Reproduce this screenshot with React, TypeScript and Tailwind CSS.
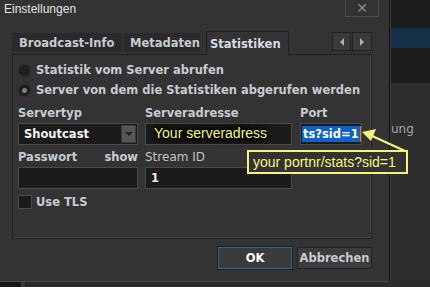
import React from 'react';

const label =
  "font-['DejaVu_Sans',sans-serif] text-[11.5px] font-bold text-[#c6ccd2] leading-[16px] whitespace-nowrap";
const input = 'h-[22px] bg-[#1b1b1b] border border-[#4a4a4a] flex items-center';

const Radio = ({ checked, text }: { checked?: boolean; text: string }) => (
  <div className="flex items-center h-[20px] gap-[5px]">
    <span className="w-[13px] h-[13px] rounded-full bg-[#1e1e1e] border border-[#2c2c2c] flex items-center justify-center">
      {checked && <span className="w-[5px] h-[5px] rounded-full bg-[#808080]" />}
    </span>
    <span className={label}>{text}</span>
  </div>
);

export default function App() {
  return (
    <div className="relative w-[430px] h-[287px] overflow-hidden bg-[#1c1c1c] flex flex-col">
      <div className="flex h-[282px]">
        {/* dialog */}
        <div className="w-[390px] h-full bg-[#333333] border-r border-[#121212] border-b border-b-[#4a4a4a] flex flex-col">
          {/* title bar */}
          <div className="flex justify-between h-[17px]">
            <span className="pl-[4px] pt-[1px] font-['Liberation_Sans',sans-serif] text-[12px] leading-[16px] text-[#e2e2e2]">
              Einstellungen
            </span>
            <div className="-mt-px mr-[10px] w-[34px] h-[18px] border border-[#4e4e4e] flex items-center justify-center text-[#8a8a8a] font-['DejaVu_Sans',sans-serif] text-[14px] font-bold leading-none">
              ✕
            </div>
          </div>

          {/* tabs */}
          <div className="mt-[14px] ml-[12px] w-[360px] flex h-[23px]">
            <div className="mt-[2px] h-[19px] w-[110px] bg-[#2a2a2a] flex items-center pl-[7px]">
              <span className={label}>Broadcast-Info</span>
            </div>
            <div className="mt-[2px] ml-[2px] h-[19px] w-[76px] bg-[#2a2a2a] flex items-center pl-[6px]">
              <span className={label}>Metadaten</span>
            </div>
            <div className="ml-[6px] h-[24px] w-[83px] bg-[#333333] border border-b-0 border-[#1f1f1f] flex items-center pl-[3px] relative z-10">
              <span className={`${label} text-[#d8dde2]`}>Statistiken</span>
            </div>
            <div className="ml-auto mt-[1px] flex gap-[1px]">
              <div className="w-[19px] h-[19px] bg-[#3a3a3a] border border-[#222] flex items-center justify-center">
                <span className="w-0 h-0 border-y-[4px] border-y-transparent border-r-[4px] border-r-[#b0b0b0]" />
              </div>
              <div className="w-[20px] h-[19px] bg-[#3a3a3a] border border-[#222] flex items-center justify-center">
                <span className="w-0 h-0 border-y-[4px] border-y-transparent border-l-[4px] border-l-[#b0b0b0]" />
              </div>
            </div>
          </div>

          {/* panel */}
          <div className="ml-[12px] w-[360px] h-[185px] border border-[#1f1f1f] shadow-[inset_-1px_-1px_0_#444] pl-[5px] pt-[5px] flex flex-col">
            <Radio text="Statistik vom Server abrufen" />
            <Radio checked text="Server von dem die Statistiken abgerufen werden" />

            <div className="mt-[5px] flex">
              <div className="w-[120px]">
                <div className={label}>Servertyp</div>
                <div className={`${input} mt-[2px] justify-between`}>
                  <span className={`${label} text-[#f4f4f4] pl-[5px]`}>Shoutcast</span>
                  <span className="mr-px w-[15px] h-[18px] bg-[#555] border border-[#3a3a3a] flex items-center justify-center">
                    <span className="w-0 h-0 border-x-[4px] border-x-transparent border-t-[4px] border-t-[#222]" />
                  </span>
                </div>
              </div>
              <div className="ml-[7px] w-[147px]">
                <div className={label}>Serveradresse</div>
                <div className={`${input} mt-[2px]`} />
              </div>
              <div className="ml-[8px] w-[62px]">
                <div className={label}>Port</div>
                <div className={`${input} mt-[2px] pl-[1px]`}>
                  <span className={`${label} bg-[#0f62c8] text-white px-[1px] h-[16px]`}>ts?sid=1</span>
                  <span className="w-px h-[16px] bg-[#e0782a]" />
                </div>
              </div>
            </div>

            <div className="mt-[4px] flex">
              <div className="w-[120px]">
                <div className="flex justify-between">
                  <span className={label}>Passwort</span>
                  <span className={label}>show</span>
                </div>
                <div className={`${input} mt-[2px]`} />
              </div>
              <div className="ml-[7px] w-[147px]">
                <div className="font-['DejaVu_Sans',sans-serif] text-[12px] leading-[16px] text-[#bfc4c9]">Stream ID</div>
                <div className={`${input} mt-[2px] pl-[5px]`}>
                  <span className={`${label} text-[#f0f0f0]`}>1</span>
                </div>
              </div>
            </div>

            <div className="mt-[6px] flex items-center gap-[4px] h-[14px]">
              <span className="w-[14px] h-[14px] bg-[#1b1b1b] border border-[#4a4a4a]" />
              <span className={label}>Use TLS</span>
            </div>
          </div>

          {/* buttons */}
          <div className="mt-[8px] ml-[218px] flex gap-[5px]">
            <div className="w-[74px] h-[22px] bg-[#3a3a3a] border border-[#1f6e92] shadow-[0_0_0_1px_#1e1e1e] flex items-center justify-center">
              <span className={`${label} text-white`}>OK</span>
            </div>
            <div className="w-[75px] h-[22px] bg-[#3c3c3c] border border-[#222] flex items-center justify-center">
              <span className={`${label} text-[#c2c2c2]`}>Abbrechen</span>
            </div>
          </div>
        </div>

        {/* window behind, right side */}
        <div className="flex-1 flex flex-col border-l border-[#3a3a3a]">
          <div className="h-[83px] bg-[#1c1c1c] flex flex-col">
            <div className="mt-[28px] h-[20px] bg-[#162f49]" />
          </div>
          <div className="flex-1 bg-[#2d2d2d] pt-[32px]">
            <span className="font-['DejaVu_Sans',sans-serif] text-[12px] leading-[16px] text-[#a8a8a8] whitespace-nowrap">
              ung
            </span>
          </div>
        </div>
      </div>

      {/* bottom edge of window behind */}
      <div className="flex-1 flex">
        <div className="w-[20px] bg-[#151515]" />
        <div className="w-[6px] bg-[#3a3a3a] border-x border-[#222]" />
        <div className="flex-1 bg-[#2b2b2b]" />
      </div>

      {/* annotations */}
      <div className="absolute left-[154px] top-[124px] font-['Liberation_Sans',sans-serif] text-[14px] leading-[18px] text-[#f8f87a] [text-shadow:0_0_2px_#000,0_0_3px_#000,0_0_5px_#000,0_0_7px_#000,0_0_9px_#000]">
        Your serveradress
      </div>
      <div className="absolute left-[247px] top-[150px] w-[161px] h-[24px] border-2 border-[#f4f47a] bg-[#323232] pl-[4px] flex items-center font-['Liberation_Sans',sans-serif] text-[14px] text-[#f8f87a] whitespace-nowrap">
        your portnr/stats?sid=1
      </div>
      <svg className="absolute left-0 top-0" width="430" height="287">
        <line x1="405" y1="151" x2="370" y2="135" stroke="#f4f47a" strokeWidth="2" />
        <polygon points="362,132 376,129 371,141" fill="#f4f47a" />
      </svg>
    </div>
  );
}
